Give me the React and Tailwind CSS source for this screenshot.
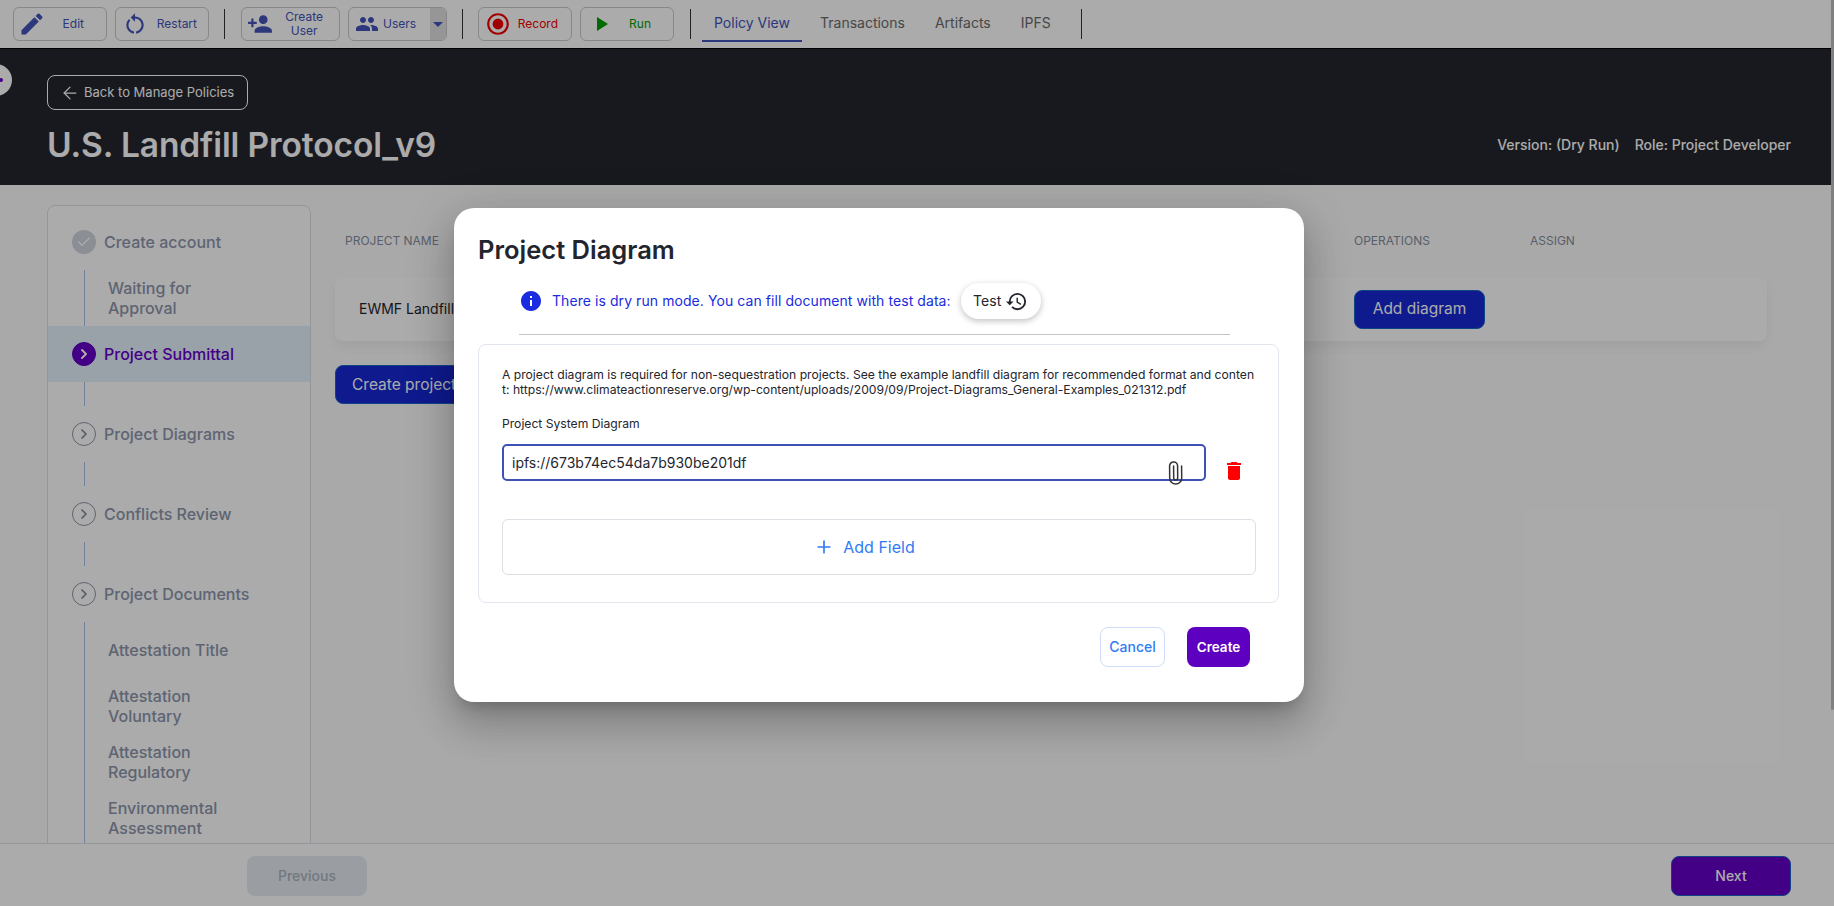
import React from "react";
import { ArrowLeft, Check, ChevronRight, Plus, Paperclip } from "lucide-react";

const Mi = ({ d, className = "" }) => (
  <svg viewBox="0 0 24 24" fill="currentColor" className={className}><path d={d} /></svg>
);
const ICONS = {
  edit: "M3 17.25V21h3.75L17.81 9.94l-3.75-3.75L3 17.25zM20.71 7.04a1 1 0 0 0 0-1.41l-2.34-2.34a1 1 0 0 0-1.41 0l-1.83 1.83 3.75 3.75 1.83-1.83z",
  restart: "M12 5V2L8 6l4 4V7c3.31 0 6 2.69 6 6 0 2.97-2.17 5.43-5 5.91v2.02c3.95-.49 7-3.85 7-7.93 0-4.42-3.58-8-8-8zm-6 8c0-1.65.67-3.15 1.76-4.24L6.34 7.34A8.014 8.014 0 0 0 4 13c0 4.08 3.05 7.44 7 7.93v-2.02c-2.83-.48-5-2.94-5-5.91z",
  addUser: "M15 12c2.21 0 4-1.79 4-4s-1.79-4-4-4-4 1.79-4 4 1.79 4 4 4zm-9-2V7H4v3H1v2h3v3h2v-3h3v-2H6zm9 4c-2.67 0-8 1.34-8 4v2h16v-2c0-2.66-5.33-4-8-4z",
  users: "M16 11c1.66 0 2.99-1.34 2.99-3S17.66 5 16 5s-3 1.34-3 3 1.34 3 3 3zm-8 0c1.66 0 2.99-1.34 2.99-3S9.66 5 8 5 5 6.34 5 8s1.34 3 3 3zm0 2c-2.33 0-7 1.17-7 3.5V19h14v-2.5c0-2.33-4.67-3.5-7-3.5zm8 0c-.29 0-.62.02-.97.05 1.16.84 1.97 1.97 1.97 3.45V19h6v-2.5c0-2.33-4.67-3.5-7-3.5z",
  record: "M12 2C6.48 2 2 6.48 2 12s4.48 10 10 10 10-4.48 10-10S17.52 2 12 2zm0 18c-4.42 0-8-3.58-8-8s3.58-8 8-8 8 3.58 8 8-3.58 8-8 8zm0-13a5 5 0 1 0 0 10 5 5 0 0 0 0-10z",
  play: "M8 5v14l11-7z",
  info: "M12 2C6.48 2 2 6.48 2 12s4.48 10 10 10 10-4.48 10-10S17.52 2 12 2zm1 15h-2v-6h2v6zm0-8h-2V7h2v2z",
  trash: "M6 19c0 1.1.9 2 2 2h8c1.1 0 2-.9 2-2V7H6v12zM19 4h-3.5l-1-1h-5l-1 1H5v2h14V4z",
  history: "M13 3a9 9 0 0 0-9 9H1l3.89 3.89.07.14L9 12H6c0-3.87 3.13-7 7-7s7 3.13 7 7-3.13 7-7 7c-1.93 0-3.68-.79-4.94-2.06l-1.42 1.42A8.954 8.954 0 0 0 13 21a9 9 0 0 0 0-18zm-1 5v5l4.28 2.54.72-1.21-3.5-2.08V8H12z",
};

function ToolBtn({ icon, color, iconClass = "w-[26px] h-[26px]", width, label, gapClass = "justify-between pl-[7px] pr-[11px]" }) {
  return (
    <div className={`flex h-[34px] items-center rounded-md border border-[#c9c9c9] text-xs ${width} ${gapClass}`} style={{ color }}>
      <Mi d={ICONS[icon]} className={iconClass} />
      <span className="text-center leading-[14px]">{label}</span>
    </div>
  );
}
const Sep = ({ className = "" }) => <div className={`h-[30px] w-px bg-[#333] ${className}`} />;

function Step({ label, state, className = "" }) {
  const active = state === "active";
  return (
    <div className={`flex h-14 items-center pl-6 ${active ? "bg-[#e4f0fd]" : ""} ${className}`}>
      {state === "done" ? (
        <span className="flex h-6 w-6 items-center justify-center rounded-full bg-[#cfd6de] text-white"><Check className="h-4 w-4" /></span>
      ) : active ? (
        <span className="flex h-6 w-6 items-center justify-center rounded-full border border-[#5e00bf] bg-[#6500c8] text-white"><ChevronRight className="h-4 w-4" strokeWidth={3} /></span>
      ) : (
        <span className="flex h-6 w-6 items-center justify-center rounded-full border border-[#8a94a6] text-[#7f8899]"><ChevronRight className="h-4 w-4" strokeWidth={2.5} /></span>
      )}
      <span className={`ml-2 text-base font-medium ${active ? "text-[#6500c8]" : "text-[#8c95ab]"}`}>{label}</span>
    </div>
  );
}
const Conn = ({ h = "h-6", className = "" }) => <div className={`ml-[36px] w-px bg-[#a9c4ee] ${h} ${className}`} />;

function SubStep({ children, h = "h-14" }) {
  return (
    <div className={`flex ${h} items-center pl-[60px]`}>
      <span className="w-[130px] text-base font-medium leading-5 text-[#8c95ab]">{children}</span>
    </div>
  );
}

export default function App() {
  return (
    <div className="relative flex h-[906px] w-full flex-col overflow-hidden bg-white font-['Inter',sans-serif] text-[#23252e]">
      {/* toolbar */}
      <div className="flex h-[49px] shrink-0 items-center border-b border-black bg-white pl-[13px]">
        <ToolBtn icon="edit" color="#4352b8" width="w-[94px]" label="Edit" iconClass="w-[28px] h-[28px]" gapClass="justify-between pl-[4px] pr-[22px]" />
        <div className="w-2" />
        <ToolBtn icon="restart" color="#4352b8" width="w-[94px]" label="Restart" iconClass="w-[26px] h-[26px]" gapClass="justify-between pl-[6px] pr-[11px]" />
        <Sep className="ml-[15px] mr-[16px]" />
        <ToolBtn icon="addUser" color="#4352b8" width="w-[99px]" label={<>Create<br />User</>} iconClass="w-[26px] h-[26px]" gapClass="justify-between pl-[5px] pr-[16px]" />
        <div className="w-2" />
        <div className="flex h-[34px] w-[99px] items-center overflow-hidden rounded-md border border-[#c9c9c9] text-xs text-[#4352b8]">
          <div className="flex flex-1 items-center pl-1.5">
            <Mi d={ICONS.users} className="h-[24px] w-[24px]" />
            <span className="ml-1">Users</span>
          </div>
          <div className="flex h-full w-4 items-center justify-center bg-[#e0e0e0]">
            <span className="h-0 w-0 border-x-[5px] border-t-[5px] border-x-transparent border-t-[#4352b8]" />
          </div>
        </div>
        <Sep className="mx-[15px]" />
        <ToolBtn icon="record" color="#f00000" width="w-[94px]" label="Record" iconClass="w-[26px] h-[26px]" gapClass="justify-between pl-[6px] pr-[13px]" />
        <div className="w-2" />
        <ToolBtn icon="play" color="#00a000" width="w-[94px]" label="Run" iconClass="w-[24px] h-[24px]" gapClass="justify-between pl-[8px] pr-[22px]" />
        <Sep className="mx-[16px]" />
        <div className="-ml-[5px] flex h-[35px] items-center border-b-2 border-[#4352b8] px-[12px] pt-0 text-sm text-[#4352b8]">Policy View</div>
        <div className="ml-[18px] pb-0.5 text-sm text-[#6b6b6b]">Transactions</div>
        <div className="ml-[30px] pb-0.5 text-sm text-[#6b6b6b]">Artifacts</div>
        <div className="ml-[30px] pb-0.5 text-sm text-[#6b6b6b]">IPFS</div>
        <Sep className="ml-[30px]" />
      </div>

      {/* header */}
      <div className="relative flex h-[136px] shrink-0 flex-col items-start bg-[#24262d] pl-[47px] pr-[43px] pt-[26px] text-white">
        <div className="flex h-[35px] w-[201px] items-center rounded-lg border border-white pl-[12px] text-[13px]">
          <ArrowLeft className="mr-1 h-5 w-5" strokeWidth={1.5} />
          Back to Manage Policies
        </div>
        <div className="mt-[11px] flex w-full items-center justify-between">
          <div className="text-[33.5px] font-semibold leading-[48px] tracking-[-0.1px]">U.S. Landfill Protocol_v9</div>
          <div className="flex gap-[15px] text-sm font-medium">
            <span>Version: (Dry Run)</span>
            <span>Role: Project Developer</span>
          </div>
        </div>
        <div className="absolute -left-[20px] top-[15px] flex h-8 w-8 items-center justify-center rounded-full bg-white pl-[10px]">
          <span className="h-1 w-1 rounded-full bg-[#6500c8]" />
        </div>
      </div>

      {/* body */}
      <div className="flex min-h-0 flex-1 bg-[#fdfdfe] pl-[47px] pr-[67px] pt-[20px]">
        <div className="h-[700px] w-[264px] shrink-0 rounded-lg border border-[#dbe0e7] bg-white pt-[8px]">
          <Step label="Create account" state="done" />
          <Conn h="h-14" className="absolute" />
          <SubStep>Waiting for Approval</SubStep>
          <Step label="Project Submittal" state="active" />
          <Conn />
          <Step label="Project Diagrams" />
          <Conn />
          <Step label="Conflicts Review" />
          <Conn />
          <Step label="Project Documents" />
          <div className="relative">
            <div className="absolute bottom-0 left-[36px] top-0 w-px bg-[#a9c4ee]" />
            <SubStep>Attestation Title</SubStep>
            <SubStep>Attestation Voluntary</SubStep>
            <SubStep>Attestation Regulatory</SubStep>
            <SubStep>Environmental Assessment</SubStep>
            <SubStep>Regulatory Compliance</SubStep>
          </div>
        </div>

        <div className="ml-6 min-w-0 flex-1">
          <div className="grid h-[72px] grid-cols-[1009px_176px_auto] items-center px-2.5 text-xs text-[#848ea0]">
            <span>PROJECT NAME</span>
            <span>OPERATIONS</span>
            <span>ASSIGN</span>
          </div>
          <div className="grid h-16 grid-cols-[995px_176px_auto] items-center rounded-lg bg-white pl-6 text-sm text-[#23252e] shadow-[0_6px_14px_rgba(0,0,0,0.06)]">
            <span>EWMF Landfill</span>
            <span className="flex h-[39px] w-[131px] items-center justify-center rounded-lg border border-[#1a66c9] bg-[#1528d4] text-[15.5px] text-white">Add diagram</span>
          </div>
          <div className="mt-6 flex h-[39px] w-[180px] items-center rounded-lg border border-[#1a66c9] bg-[#1528d4] pl-[16px] text-[15.5px] text-white">Create project</div>
        </div>
      </div>

      {/* footer */}
      <div className="absolute inset-x-0 bottom-0 flex h-[63px] items-center border-t border-[#dbe0e7] bg-white pt-px">
        <div className="ml-[247px] flex h-10 w-[120px] items-center justify-center rounded-lg bg-[#e6ecf2] text-sm font-medium text-[#aab3bf]">Previous</div>
        <div className="ml-auto mr-[43px] flex h-10 w-[120px] items-center justify-center rounded-lg border border-[#1a66c9] bg-[#6500c8] text-sm font-medium text-white">Next</div>
      </div>

      {/* dim overlay */}
      <div className="absolute inset-0 bg-black/[0.33]" />
      <div className="absolute right-0 top-0 h-[710px] w-[3px] rounded-b-sm bg-[#808080]" />

      {/* modal */}
      <div className="absolute left-[454px] top-[208px] h-[494px] w-[850px] rounded-[20px] bg-white px-6 shadow-[0_11px_15px_-7px_rgba(0,0,0,0.2),0_24px_38px_3px_rgba(0,0,0,0.14),0_9px_46px_8px_rgba(0,0,0,0.12)]">
        <h2 className="pt-[25px] text-[25.5px] font-semibold leading-[34px] text-[#23252e]">Project Diagram</h2>
        <div className="ml-[41px] mt-[10px] flex h-[48px] items-center text-sm tracking-[0.005em] text-[#1a2be0]">
          <Mi d={ICONS.info} className="h-6 w-6" />
          <span className="ml-[9px]">There is dry run mode. You can fill document with test data:</span>
          <span className="ml-[10px] flex h-9 w-[80px] items-center justify-center gap-1 rounded-full bg-white text-sm text-[#23252e] shadow-[0_2px_6px_rgba(0,0,0,0.25)]">
            Test
            <Mi d={ICONS.history} className="h-[23px] w-[23px]" />
          </span>
        </div>
        <div className="ml-[41px] mt-[9px] h-px w-[711px] bg-[#c4c4c4]" />
        <div className="mt-[9px] h-[259px] w-[801px] rounded-lg border border-[#e1e6ee] px-[23px] pt-[22px]">
          <p className="text-[12.15px] leading-[15px] text-[#23252e]">
            A project diagram is required for non-sequestration projects. See the example landfill diagram for recommended format and conten<br />t: https://www.climateactionreserve.org/wp-content/uploads/2009/09/Project-Diagrams_General-Examples_021312.pdf
          </p>
          <div className="mt-[19px] text-[12.15px] leading-[15px] text-[#23252e]">Project System Diagram</div>
          <div className="mt-[13px] flex h-[37px] items-start">
            <div className="relative flex h-[37px] w-[704px] items-center rounded-[5px] border-2 border-[#3f51b5] pl-2 text-sm text-[#23252e]">
              ipfs://673b74ec54da7b930be201df
              <Paperclip className="absolute -bottom-[6px] right-[17px] h-[24px] w-[24px] -rotate-45 text-[#333]" strokeWidth={1.5} />
            </div>
            <Mi d={ICONS.trash} className="ml-[16px] mt-[15px] h-6 w-6 text-[#f00]" />
          </div>
          <div className="mt-[38px] flex h-14 w-[754px] items-center justify-center gap-[9px] rounded-md border border-[#dcdfe4] pr-[29px] text-base text-[#2f7bf5]">
            <Plus className="h-5 w-5" />
            Add Field
          </div>
        </div>
        <div className="mt-6 flex justify-end gap-[22px] pr-[30px]">
          <div className="flex h-10 w-[65px] items-center justify-center rounded-lg border border-[#cfdcfb] text-sm font-medium text-[#2f7bf5]">Cancel</div>
          <div className="flex h-10 w-[63px] items-center justify-center rounded-lg bg-[#5e00bf] text-[13.5px] font-semibold text-white">Create</div>
        </div>
      </div>
    </div>
  );
}
